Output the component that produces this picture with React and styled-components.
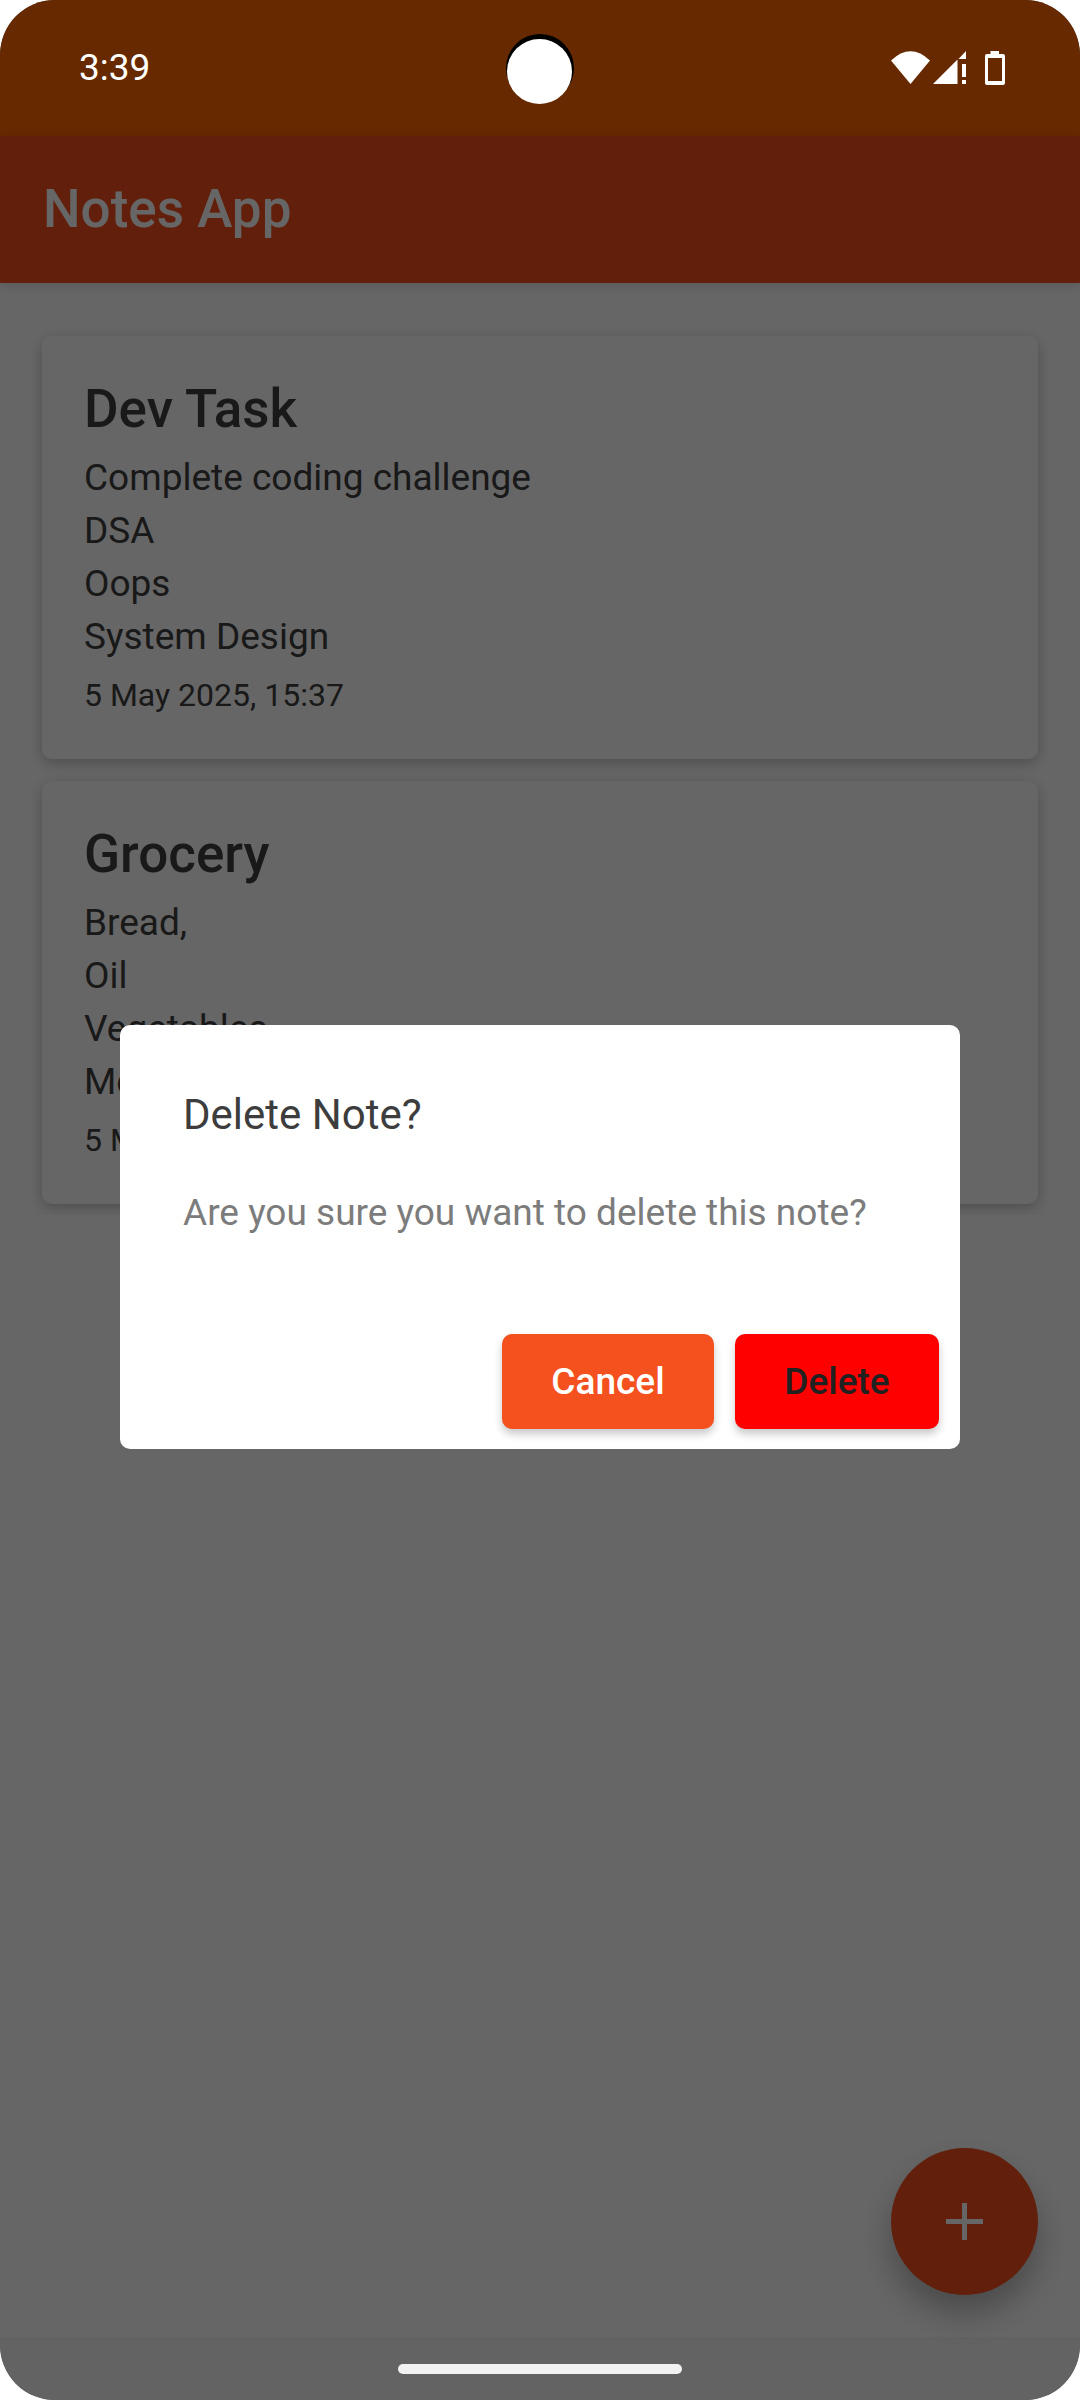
import React from "react";
import styled, { createGlobalStyle } from "styled-components";

const GlobalStyle = createGlobalStyle`
  *, *::before, *::after { box-sizing: border-box; }
  body {
    margin: 0;
    background: #fff;
    font-family: Roboto, "Noto Sans", sans-serif;
  }
  h1, h2, p { margin: 0; }
`;

const Screen = styled.div`
  display: flex;
  flex-direction: column;
  min-height: 100vh;
  overflow: hidden;
  border-radius: 55px;
  background: #666;
`;

const StatusBar = styled.header`
  display: grid;
  grid-template-columns: 1fr auto 1fr;
  align-items: center;
  height: 136px;
  padding: 0 74px;
  background: #662900;
  color: #fff;
`;

const Clock = styled.time`
  padding-left: 5px;
  font-size: 37px;
  line-height: 44px;
`;

const Camera = styled.svg`
  width: 68px;
  height: 72px;
`;

const StatusIcons = styled.svg`
  justify-self: end;
  width: 115px;
  height: 34px;
`;

const Body = styled.div`
  position: relative;
  flex: 1;
  display: flex;
  flex-direction: column;
  background: #fff;
`;

const AppBar = styled.div`
  display: flex;
  align-items: center;
  height: 147px;
  padding: 0 43px 2px;
  background: #f4511e;
  box-shadow: 0 3px 10px rgba(0, 0, 0, 0.12);
`;

const AppTitle = styled.h1`
  color: #fff;
  font-size: 53px;
  font-weight: 500;
  line-height: 62px;
`;

const NoteList = styled.main`
  display: flex;
  flex-direction: column;
  gap: 22px;
  margin-top: 32px;
  padding: 21px 42px 11px;
  overflow: hidden;
`;

const NoteCard = styled.article`
  display: flex;
  flex-direction: column;
  gap: 11px;
  padding: 42px;
  border-radius: 10px;
  background: #fff;
  color: #404040;
  box-shadow: 0 4px 14px rgba(0, 0, 0, 0.24);
`;

const NoteTitle = styled.h2`
  font-size: 53px;
  font-weight: 500;
  line-height: 62px;
`;

const NoteText = styled.p`
  font-size: 37px;
  line-height: 53px;
  white-space: pre-line;
`;

const NoteDate = styled.time`
  font-size: 32px;
  line-height: 43px;
`;

const Fab = styled.button`
  display: grid;
  place-items: center;
  align-self: flex-end;
  width: 147px;
  height: 147px;
  margin: auto 42px 42px;
  padding: 0;
  border: 0;
  border-radius: 50%;
  background: #f4511e;
  color: #fff;
  box-shadow: 0 18px 32px rgba(0, 0, 0, 0.28);
`;

const PlusIcon = styled.svg`
  width: 37px;
  height: 37px;
`;

const Scrim = styled.div`
  position: absolute;
  inset: 0;
  display: flex;
  align-items: center;
  justify-content: center;
  padding: 0 120px;
  background: rgba(0, 0, 0, 0.6);
`;

const Dialog = styled.section`
  flex: 1;
  padding: 63px 21px 20px 63px;
  border-radius: 10px;
  background: #fff;
`;

const DialogTitle = styled.h2`
  color: #3d3d3d;
  font-size: 42px;
  font-weight: 400;
  line-height: 53px;
`;

const DialogText = styled.p`
  padding: 45px 0 95px;
  color: #7c7c7c;
  font-size: 37px;
  line-height: 53px;
`;

const DialogActions = styled.div`
  display: flex;
  justify-content: flex-end;
  gap: 21px;
`;

const DialogButton = styled.button`
  min-width: ${({ $danger }) => ($danger ? "204px" : "212px")};
  height: 95px;
  padding: 0 42px;
  border: 0;
  border-radius: 10px;
  background: ${({ $danger }) => ($danger ? "#f00" : "#f4511e")};
  color: ${({ $danger }) => ($danger ? "#212121" : "#fff")};
  font-family: inherit;
  font-size: 37px;
  font-weight: 500;
  line-height: 53px;
  box-shadow: 0 5px 8px rgba(0, 0, 0, 0.22);
`;

const NavBar = styled.footer`
  display: flex;
  align-items: flex-end;
  justify-content: center;
  height: 63px;
  padding-bottom: 26px;
  background: #636363;
`;

const HomeHandle = styled.div`
  width: 284px;
  height: 10px;
  border-radius: 5px;
  background: #f2f2f2;
`;

const notes = [
  {
    title: "Dev Task",
    text: "Complete coding challenge\nDSA\nOops\nSystem Design",
    date: "5 May 2025, 15:37",
  },
  {
    title: "Grocery",
    text: "Bread,\nOil\nVegetables\nMeat",
    date: "5 May 2025, 15:38",
  },
];

export default function App() {
  return (
    <Screen>
      <GlobalStyle />
      <StatusBar>
        <Clock>3:39</Clock>
        <Camera viewBox="0 -2 68 72" aria-hidden="true">
          <circle cx="34" cy="34" r="34" fill="#000" />
          <circle cx="33.5" cy="37.5" r="32.5" fill="#fff" />
        </Camera>
        <StatusIcons viewBox="0 0 115 34" fill="#fff" aria-hidden="true">
          <path d="M0 9.5Q19.500 -9 39 9.500L19.500 33Z" />
          <path d="M42 33L66.500 8.500V33ZM67.500 8L75 0V8Z" />
          <path d="M71 13H75V26H71ZM71 29H75V33H71Z" />
          <path
            fillRule="evenodd"
            d="M99.500 0H108V3H112Q114 3 114 5V32Q114 34 112 34H96Q94 34 94 32V5Q94 3 96 3H99.500ZM97 7V30H111V7Z"
          />
        </StatusIcons>
      </StatusBar>
      <Body>
        <AppBar>
          <AppTitle>Notes App</AppTitle>
        </AppBar>
        <NoteList>
          {notes.map((note) => (
            <NoteCard key={note.title}>
              <NoteTitle>{note.title}</NoteTitle>
              <NoteText>{note.text}</NoteText>
              <NoteDate>{note.date}</NoteDate>
            </NoteCard>
          ))}
        </NoteList>
        <Fab type="button" aria-label="Add note">
          <PlusIcon viewBox="0 0 37 37" fill="currentColor" aria-hidden="true">
            <path d="M16 0H21V16H37V21H21V37H16V21H0V16H16Z" />
          </PlusIcon>
        </Fab>
        <Scrim>
          <Dialog role="dialog" aria-modal="true" aria-labelledby="delete-title">
            <DialogTitle id="delete-title">Delete Note?</DialogTitle>
            <DialogText>Are you sure you want to delete this note?</DialogText>
            <DialogActions>
              <DialogButton type="button">Cancel</DialogButton>
              <DialogButton type="button" $danger>
                Delete
              </DialogButton>
            </DialogActions>
          </Dialog>
        </Scrim>
      </Body>
      <NavBar>
        <HomeHandle />
      </NavBar>
    </Screen>
  );
}
